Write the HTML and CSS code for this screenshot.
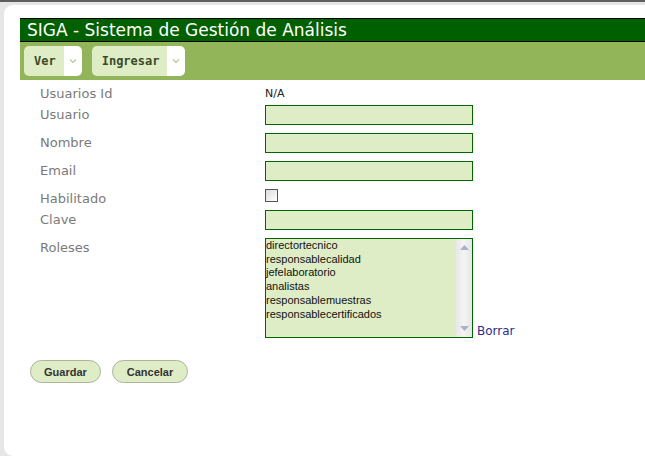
FILE: index.html
```html
<!DOCTYPE html>
<html lang="es">
<head>
<meta charset="utf-8">
<title>SIGA</title>
<link rel="stylesheet" href="styles.css">
</head>
<body>
<div class="topline"></div>
<div class="card">
  <div class="titlebar">SIGA - Sistema de Gestión de Análisis</div>
  <div class="menubar">
    <div class="menubtn"><span class="menulabel">Ver</span><span class="menuarrow"><svg width="8" height="6" viewBox="0 0 8 6"><path d="M1 1.5 L4 4.5 L7 1.5" fill="none" stroke="#b5c995" stroke-width="1.2"/></svg></span></div>
    <div class="menubtn"><span class="menulabel">Ingresar</span><span class="menuarrow"><svg width="8" height="6" viewBox="0 0 8 6"><path d="M1 1.5 L4 4.5 L7 1.5" fill="none" stroke="#b5c995" stroke-width="1.2"/></svg></span></div>
  </div>
  <div class="form">
    <div class="row row-id"><span class="label">Usuarios Id</span><span class="value">N/A</span></div>
    <div class="row row-input"><span class="label">Usuario</span><input class="field" type="text"></div>
    <div class="row row-input"><span class="label">Nombre</span><input class="field" type="text"></div>
    <div class="row row-input"><span class="label">Email</span><input class="field" type="text"></div>
    <div class="row row-check"><span class="label">Habilitado</span><span class="checkbox"></span></div>
    <div class="row row-input"><span class="label">Clave</span><input class="field" type="password"></div>
    <div class="row row-roles">
      <span class="label">Roleses</span>
      <div class="listbox">
        <div class="options">
          <div>directortecnico</div>
          <div>responsablecalidad</div>
          <div>jefelaboratorio</div>
          <div>analistas</div>
          <div>responsablemuestras</div>
          <div>responsablecertificados</div>
        </div>
        <div class="scrollbar">
          <svg width="9" height="5" viewBox="0 0 9 5"><path d="M0 5 L4.5 0 L9 5 Z" fill="#a9b3c4"/></svg>
          <svg width="9" height="5" viewBox="0 0 9 5"><path d="M0 0 L4.5 5 L9 0 Z" fill="#a9b3c4"/></svg>
        </div>
      </div>
      <a class="borrar" href="#">Borrar</a>
    </div>
  </div>
  <div class="actions">
    <button class="btn" type="button">Guardar</button>
    <button class="btn" type="button">Cancelar</button>
  </div>
</div>
</body>
</html>
```
FILE: styles.css
```css
html, body {
  margin: 0;
  padding: 0;
  height: 100%;
  overflow: hidden;
}
body {
  background: #e6e6e6;
  font-family: "DejaVu Sans", Verdana, sans-serif;
}
.topline {
  height: 2px;
  background: #5e5e5e;
}
.card {
  margin: 3px 0 0 4px;
  height: 451px;
  background: #fff;
  border-radius: 9px 0 0 9px;
  padding: 13px 0 0 16px;
  box-sizing: border-box;
}
.titlebar {
  background: #006000;
  border-top: 1px solid #000;
  border-bottom: 1px solid #000;
  height: 22px;
  line-height: 22px;
  color: #fff;
  font-size: 17px;
  padding-left: 7px;
  white-space: nowrap;
}
.menubar {
  background: #92b55a;
  height: 38px;
  display: flex;
  align-items: center;
  gap: 10px;
  padding-left: 4px;
}
.menubtn {
  display: flex;
  height: 30px;
  border-radius: 5px;
  overflow: hidden;
}
.menulabel {
  background: #deedc6;
  padding: 0 8px 0 10px;
  display: flex;
  align-items: center;
  font-family: "DejaVu Sans Mono", monospace;
  font-weight: bold;
  font-size: 12px;
  color: #3a4a28;
}
.menuarrow {
  background: #fff;
  width: 18px;
  display: flex;
  align-items: center;
  justify-content: center;
}
.form {
  padding: 4px 0 0 20px;
}
.row {
  display: flex;
  align-items: flex-start;
}
.label {
  width: 225px;
  flex: none;
  font-size: 13px;
  line-height: 15px;
  padding-top: 2px;
  color: #7a7a7a;
}
.row-id {
  height: 21px;
}
.value {
  font-size: 11px;
  line-height: 15px;
  padding-top: 2px;
  color: #222;
}
.row-input {
  height: 28px;
}
.field {
  width: 208px;
  height: 20px;
  box-sizing: border-box;
  border: 1px solid #006600;
  background: #deedc6;
  margin: 0;
  padding: 0 2px;
  outline: none;
}
.row-check {
  height: 21px;
}
.checkbox {
  width: 13px;
  height: 13px;
  box-sizing: border-box;
  border: 1px solid #555;
  background: linear-gradient(135deg, #dcdcdc, #fff);
}
.row-roles {
  align-items: flex-end;
}
.row-roles .label {
  align-self: flex-start;
}
.listbox {
  width: 208px;
  height: 100px;
  box-sizing: border-box;
  border: 1px solid #006600;
  background: #deedc6;
  display: flex;
}
.options {
  flex: 1;
  font-family: "Liberation Sans", Arial, sans-serif;
  font-size: 11px;
  line-height: 13.7px;
  color: #111;
}
.scrollbar {
  width: 16px;
  background: linear-gradient(90deg, #e8e8e8, #f4f4f4 50%, #e6e6e6);
  display: flex;
  flex-direction: column;
  justify-content: space-between;
  align-items: center;
  padding: 6px 0 6px;
  box-sizing: border-box;
}
.borrar {
  margin-left: 4px;
  font-size: 12px;
  line-height: 14px;
  color: #2b2b8c;
  text-decoration: none;
}
.actions {
  display: flex;
  gap: 11px;
  padding: 22px 0 0 10px;
}
.btn {
  height: 23px;
  border-radius: 12px;
  border: 1px solid #a9b59c;
  background: #deedc6;
  font-family: "Liberation Sans", Arial, sans-serif;
  font-weight: bold;
  font-size: 11px;
  color: #333;
  padding: 0 13px;
  margin: 0;
}
.btn + .btn {
  padding: 0 14px;
}
```
